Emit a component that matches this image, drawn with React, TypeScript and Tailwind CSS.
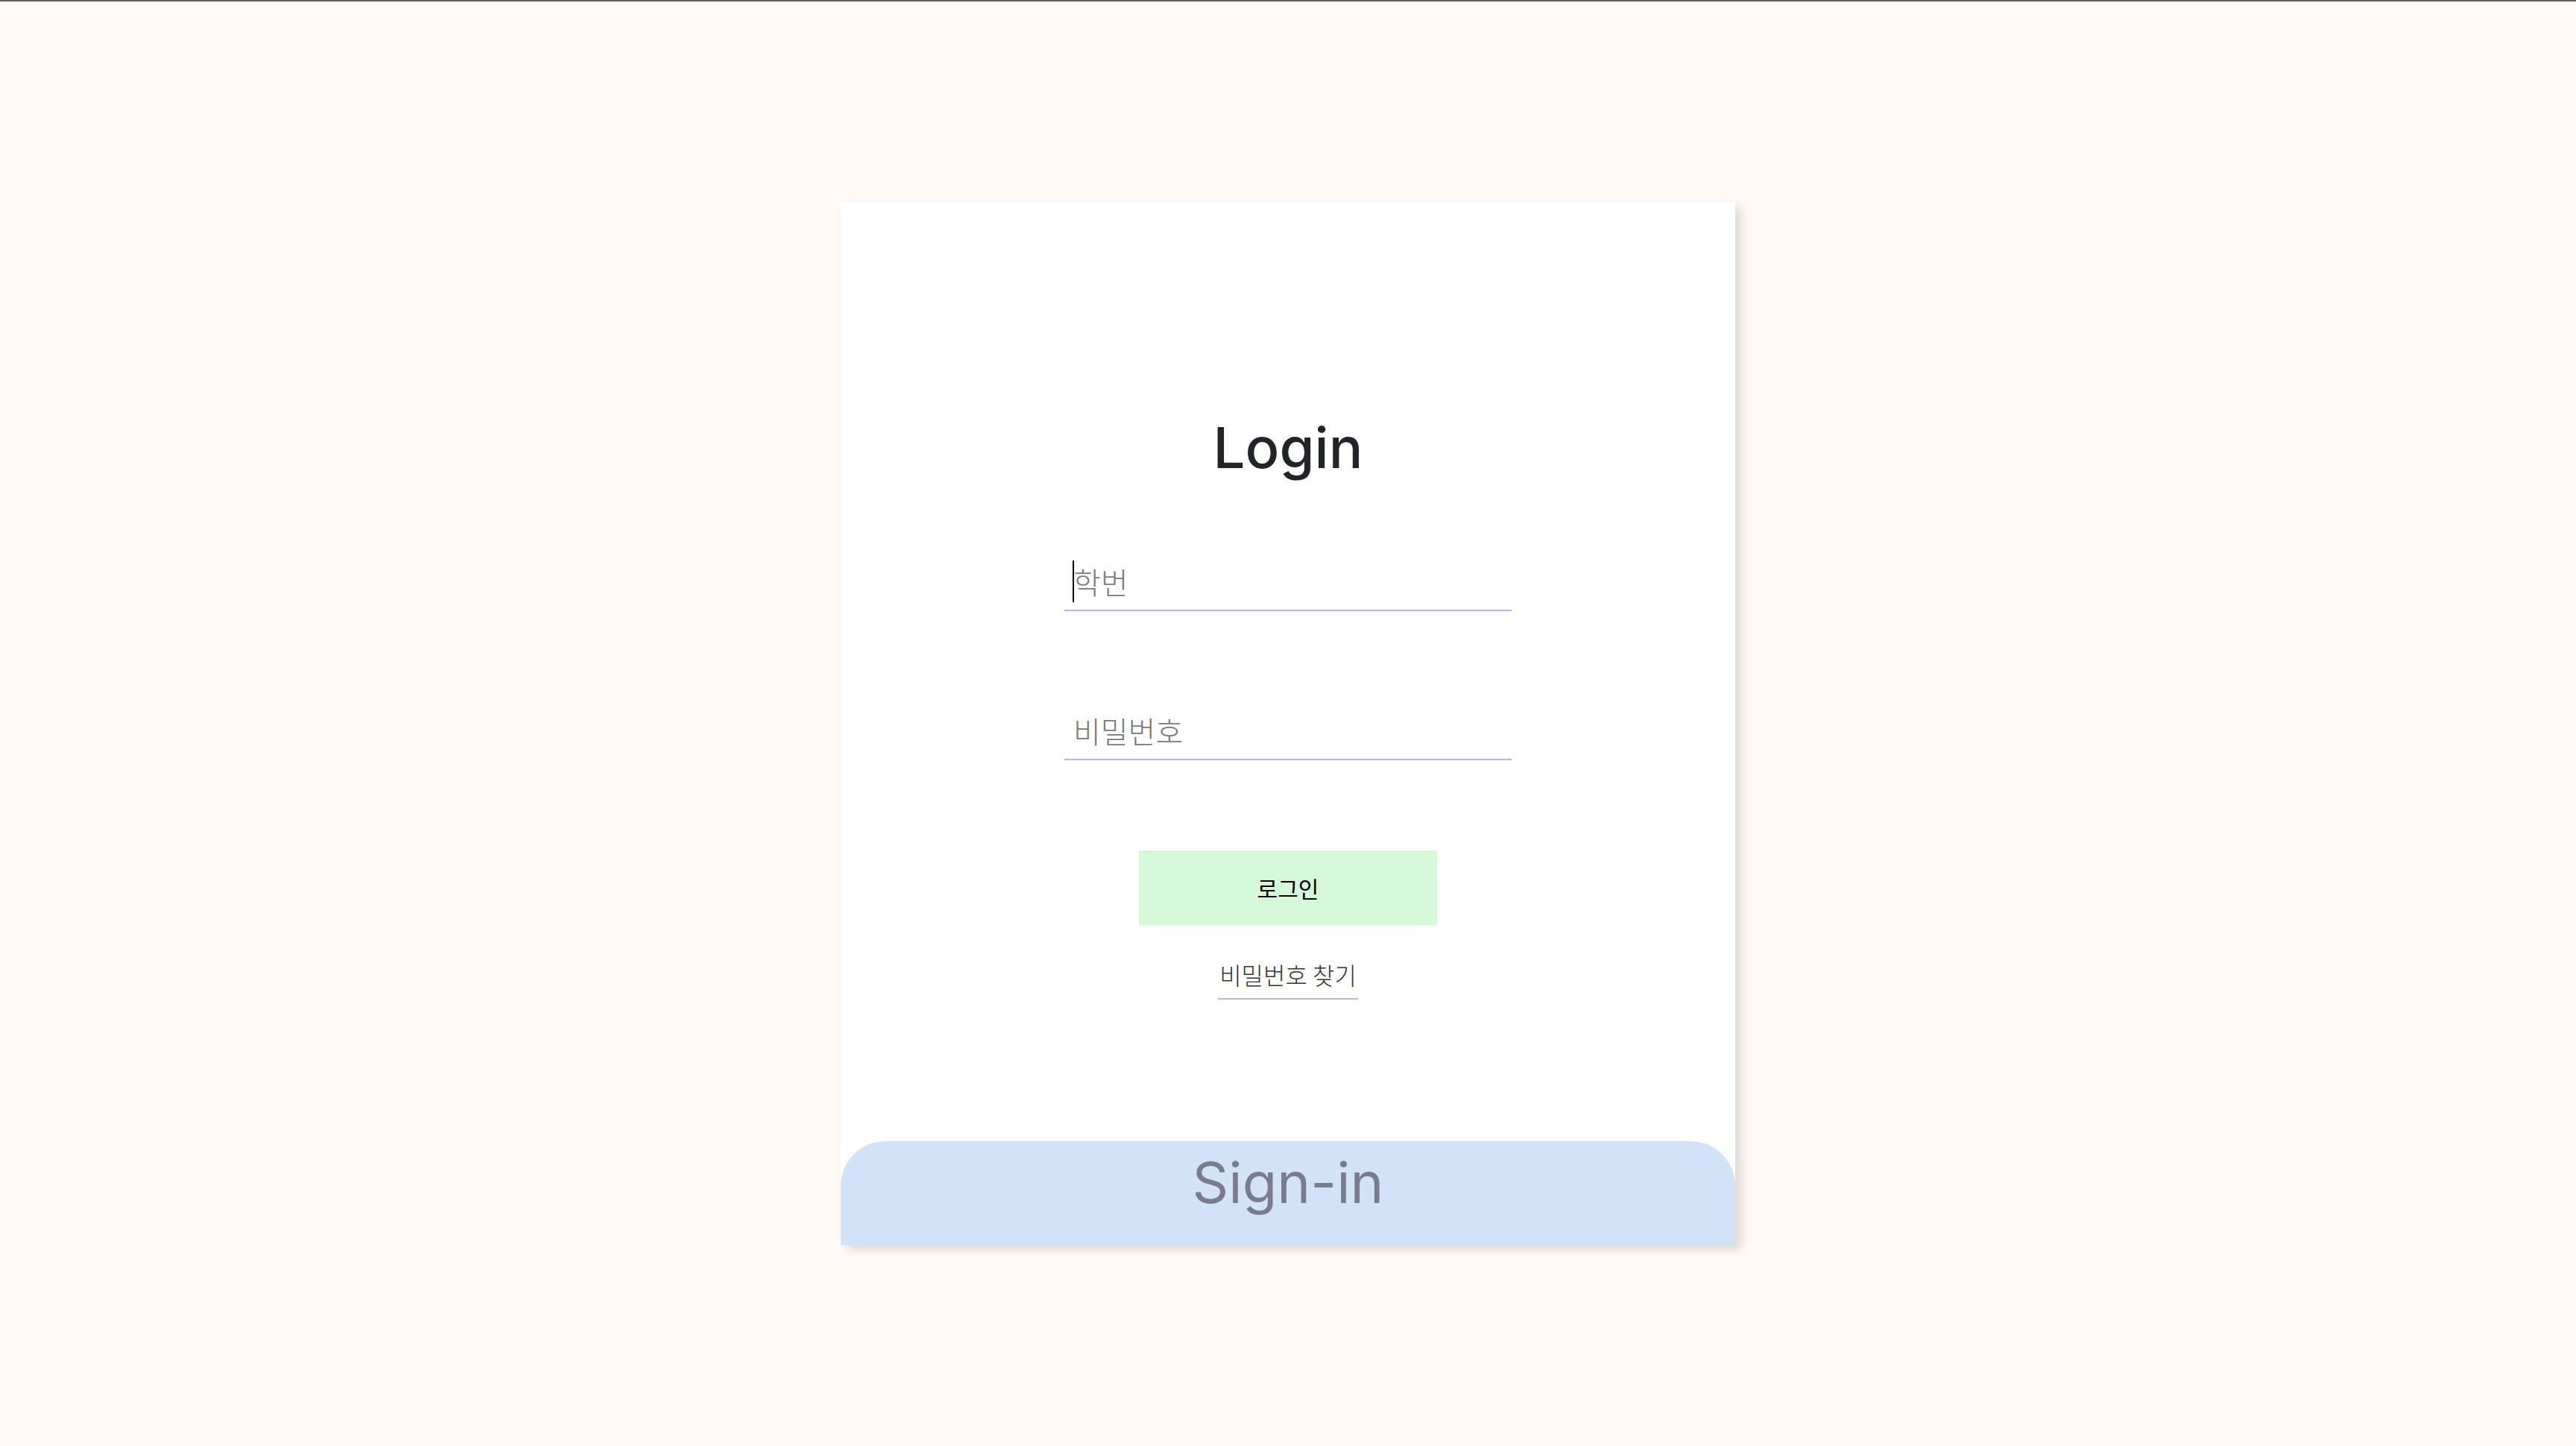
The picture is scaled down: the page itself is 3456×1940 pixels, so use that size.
import React from 'react';

const LINE = 'border-[#b8b0f1]';

export default function App() {
    return (
        <div className="min-h-screen bg-[#fffaf5] border-t-2 border-[#5f5f5f] font-['Inter','Noto_Sans_CJK_KR',sans-serif]">
            <div className="flex justify-center pt-[269px]">

                {/* Card */}
                <div className="w-[1200px] h-[1400px] bg-white flex flex-col items-center shadow-[8px_6px_12px_rgba(0,0,0,0.13)]">
                    <h1 className="mt-[283px] text-[76px] leading-[92px] font-medium text-[#212529]">Login</h1>

                    <div className="relative mt-[96px]">
                        <input
                            type="text"
                            placeholder="학번"
                            className={`w-[600px] h-[78px] px-3 border-b-2 ${LINE} text-[40px] text-black outline-none placeholder:text-[#7a7a7a] font-['Noto_Sans_CJK_KR',sans-serif] font-light`}
                        />
                        {/* caret */}
                        <span className="absolute left-[11px] top-[10px] w-[2px] h-[56px] bg-black"></span>
                    </div>
                    <input
                        type="password"
                        placeholder="비밀번호"
                        className={`mt-[122px] w-[600px] h-[78px] px-3 border-b-2 ${LINE} text-[40px] text-black outline-none placeholder:text-[#7a7a7a] font-['Noto_Sans_CJK_KR',sans-serif] font-light`}
                    />

                    <button className="mt-[121px] w-[400px] h-[100px] bg-[#d5f8d9] text-[30px] text-black font-['Noto_Sans_CJK_KR',sans-serif]">
                        로그인
                    </button>

                    <a className={`mt-[46px] px-[2px] pb-[12px] border-b-2 ${LINE} text-[32px] leading-[40px] text-[#333] font-['Noto_Sans_CJK_KR',sans-serif] font-light`}>
                        비밀번호 찾기
                    </a>

                    {/* Sign-in tab */}
                    <div className="mt-auto w-full h-[140px] pt-[9px] rounded-t-[60px] bg-[#d2e3f8] flex justify-center">
                        <span className="text-[76px] leading-[92px] h-[92px] text-[#7a7b8f]">Sign-in</span>
                    </div>
                </div>
            </div>
        </div>
    );
}
